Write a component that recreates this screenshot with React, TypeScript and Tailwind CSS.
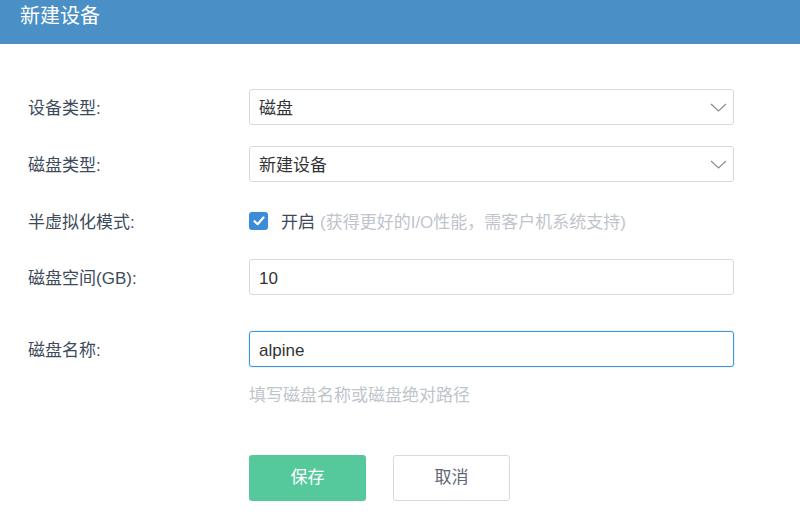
import { useState } from 'react'

const font = { fontFamily: '"Liberation Sans", "Noto Sans CJK SC", sans-serif' }

function Chevron() {
  return (
    <svg width="17" height="9" viewBox="0 0 17 9" className="shrink-0">
      <path d="M1 1 L8.5 8 L16 1" fill="none" stroke="#8c8c8c" strokeWidth="1.2" />
    </svg>
  )
}

function Label({ children }: { children: React.ReactNode }) {
  return <div className="w-[249px] shrink-0 pl-[28px] pt-[3px] text-[17px] text-[#3d4a5a]">{children}</div>
}

function Select({ value }: { value: string }) {
  return (
    <div className="flex h-[36px] w-[485px] items-center justify-between rounded-[3px] border border-[#d9d9d9] pl-[9px] pr-[6px] text-[17px] text-[#333]">
      <span className="pt-[3px]">{value}</span>
      <Chevron />
    </div>
  )
}

export default function App() {
  const [name, setName] = useState('alpine')
  const [size, setSize] = useState('10')

  return (
    <div className="h-[521px] w-[800px] bg-white" style={font}>
      <div className="h-[44px] bg-[#4a8fc5] px-[20px] pt-[3px] text-[20px] leading-[26px] text-white">新建设备</div>

      <div className="pt-[45px]">
        <div className="mb-[21px] flex items-center">
          <Label>设备类型:</Label>
          <Select value="磁盘" />
        </div>
        <div className="mb-[21px] flex items-center">
          <Label>磁盘类型:</Label>
          <Select value="新建设备" />
        </div>
        <div className="mb-[20px] flex h-[36px] items-center">
          <Label>半虚拟化模式:</Label>
          <div className="flex items-center text-[17px]">
            <span className="flex h-[18px] w-[19px] items-center justify-center rounded-[3px] bg-[#3b8dd8]">
              <svg width="12" height="10" viewBox="0 0 12 10">
                <path d="M1.5 5.2 L4.6 8.2 L10.5 1.5" fill="none" stroke="white" strokeWidth="2.2" strokeLinecap="round" strokeLinejoin="round" />
              </svg>
            </span>
            <span className="ml-[13px] pt-[3px] text-[#3d4a5a]">开启</span>
            <span className="ml-[5px] pt-[3px] text-[#c0c4cc]">(获得更好的I/O性能，需客户机系统支持)</span>
          </div>
        </div>
        <div className="mb-[36px] flex items-center">
          <Label>磁盘空间(GB):</Label>
          <input
            value={size}
            onChange={(e) => setSize(e.target.value)}
            className="h-[36px] w-[485px] rounded-[3px] border border-[#d9d9d9] px-[9px] pt-[3px] text-[17px] text-[#333] outline-none"
          />
        </div>
        <div className="flex items-center">
          <Label>磁盘名称:</Label>
          <input
            value={name}
            onChange={(e) => setName(e.target.value)}
            className="h-[36px] w-[485px] rounded-[3px] border border-[#3a96d8] px-[9px] pt-[3px] text-[17px] text-[#333] shadow-[0_0_2px_rgba(58,150,216,0.4)] outline-none"
          />
        </div>
        <div className="ml-[249px] mt-[16px] text-[17px] text-[#c0c4cc]">填写磁盘名称或磁盘绝对路径</div>

        <div className="ml-[249px] mt-[46px] flex gap-[27px]">
          <button className="h-[46px] w-[117px] rounded-[3px] bg-[#55c99c] text-[17px] text-white">保存</button>
          <button className="h-[46px] w-[117px] rounded-[3px] border border-[#d9d9d9] bg-white text-[17px] text-[#5d6673]">取消</button>
        </div>
      </div>
    </div>
  )
}
